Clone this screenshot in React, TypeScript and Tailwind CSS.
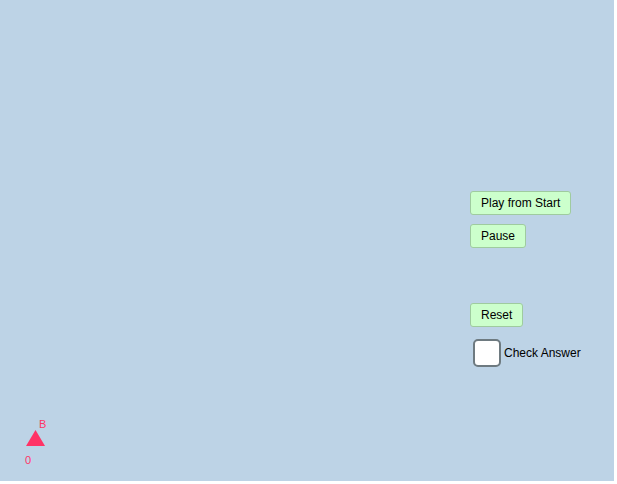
import React from "react";

const btn =
  "h-6 px-[10px] rounded-[3px] border border-[#9fcb9f] bg-[#ccffcc] text-[12px] text-black leading-none";

export default function App() {
  return (
    <div className="w-[617px] h-[484px] bg-white" style={{ fontFamily: '"Liberation Sans", Arial, sans-serif' }}>
      <div className="relative w-[614px] h-[481px] bg-[#bdd3e6] overflow-hidden">
        {/* Controls */}
        <div className="absolute left-[470px] top-[191px] flex flex-col items-start">
          <button className={btn}>Play from Start</button>
          <button className={`${btn} mt-[9px]`}>Pause</button>
          <button className={`${btn} mt-[55px]`}>Reset</button>
          <label className="mt-3 ml-[3px] flex items-center gap-[3px] text-[12px] text-black">
            <span className="w-[28px] h-[28px] rounded-[5px] border-2 border-[#6e7a80] bg-white" />
            Check Answer
          </label>
        </div>

        {/* Marker B */}
        <span className="absolute left-[39px] top-[416px] text-[11px] text-[#ff3366]">B</span>
        <svg className="absolute left-[26px] top-[430px]" width="19" height="16" viewBox="0 0 19 16">
          <polygon points="9.5,0 19,16 0,16" fill="#ff3366" />
        </svg>
        <span className="absolute left-[25px] top-[452px] text-[11px] text-[#ff3366]">0</span>
      </div>
    </div>
  );
}
